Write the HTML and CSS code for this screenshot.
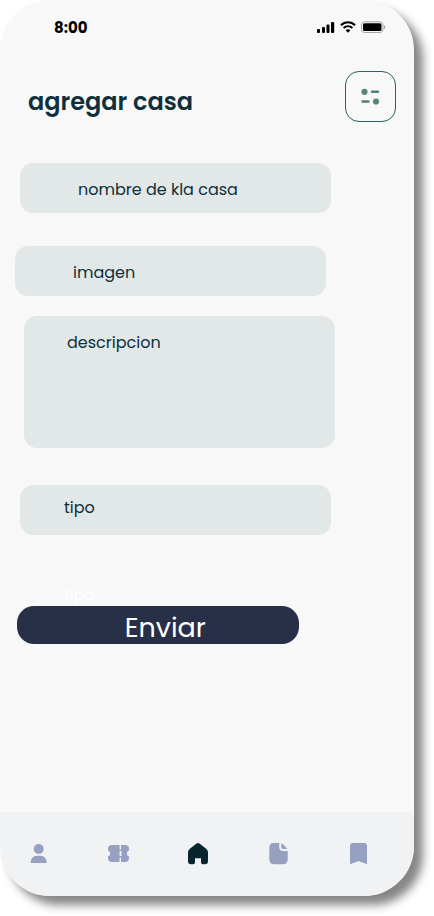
FILE: index.html
```html
<!DOCTYPE html>
<html lang="es">
<head>
<meta charset="utf-8">
<meta name="viewport" content="width=device-width, initial-scale=1">
<title>agregar casa</title>
<link rel="stylesheet" href="styles.css">
</head>
<body>
<div class="phone">
  <div class="status">
    <span class="time">8:00</span>
    <div class="indicators">
      <svg width="18" height="12" viewBox="0 0 18 12" aria-hidden="true"><rect x="0" y="8" width="3" height="4" rx="1"/><rect x="5" y="6" width="3" height="6" rx="1"/><rect x="9.500" y="3.500" width="3" height="8.500" rx="1"/><rect x="14" y="1" width="3.200" height="11" rx="1"/></svg>
      <svg width="16" height="12" viewBox="0 0 16 12" aria-hidden="true"><g fill="none" stroke="#000" stroke-width="2"><path d="M1 4.300C5 .3 11 .3 15 4.300"/><path d="M3.600 7.100c2.600-2.400 6.200-2.400 8.800 0"/></g><path d="M5.600 9.200c1.500-1.200 3.300-1.200 4.800 0L8 11.700z"/></svg>
      <svg width="25" height="12" viewBox="0 0 25 12" aria-hidden="true"><rect x=".5" y=".8" width="21.500" height="10.700" rx="3" fill="none" stroke="#a6a6a6"/><rect x="2" y="2.300" width="18.500" height="7.700" rx="1.500"/><path d="M23 4.200v4c1.700-.8 1.700-3.200 0-4z" fill="#a6a6a6"/></svg>
    </div>
  </div>
  <header class="header">
    <h1>agregar casa</h1>
    <button class="filter" type="button" aria-label="Filtros">
      <svg width="20" height="18" viewBox="0 0 20 18" aria-hidden="true"><g fill="#568974"><circle cx="3.500" cy="3.800" r="3.100"/><circle cx="15" cy="13.500" r="3.100"/></g><path d="M11 3.800h6M1.500 13.500H7.500" stroke="#4e7f7d" stroke-width="2.400" stroke-linecap="round"/></svg>
    </button>
  </header>
  <form class="form">
    <input class="field name" type="text" placeholder="nombre de kla casa" aria-label="nombre de kla casa">
    <input class="field image" type="text" placeholder="imagen" aria-label="imagen">
    <textarea class="field description" placeholder="descripcion" aria-label="descripcion"></textarea>
    <input class="field type" type="text" placeholder="tipo" aria-label="tipo">
    <p class="hint">tipo</p>
    <button class="submit" type="button">Enviar</button>
  </form>
  <nav class="nav">
    <a href="#perfil" aria-label="Perfil"><svg width="24" height="24" viewBox="0 0 24 24" aria-hidden="true"><circle cx="12.700" cy="7" r="5"/><path d="M4.700 21c0-4.200 2.600-7.200 6-7.200h4c3.400 0 6 3 6 7.200z"/></svg></a>
    <a href="#entradas" aria-label="Entradas"><svg width="24" height="24" viewBox="0 0 24 24" aria-hidden="true"><path d="M6 3h7.600v4.500h1v1.500h-1v5h1v1.500h-1V20H6q-4 0-4-4v-1.500q2.200-.6 2.200-3T2 8.500V7q0-4 4-4zM15 3h4q4 0 4 4v1.500q-2.200.6-2.200 3t2.200 3V16q0 4-4 4h-4v-4.500h-.5V14h1V9h-1V7.500h.5z"/></svg></a>
    <a class="active" href="#inicio" aria-label="Inicio"><svg width="24" height="24" viewBox="0 0 24 24" aria-hidden="true"><path d="M10.300 1.800q1.700-1.400 3.400 0l6.500 5Q22 8.300 22 10.300v9q0 3-3 3h-2q-2 0-2-2v-4h-6v4q0 2-2 2H5q-3 0-3-3v-9Q2 8.300 3.800 6.800z"/></svg></a>
    <a href="#documentos" aria-label="Documentos"><svg width="24" height="24" viewBox="0 0 24 24" aria-hidden="true"><path d="M7.500 1h5.700v4.300q0 3.700 3.700 3.700h4.800v8.300q0 5-5 5H8.300q-5 0-5-5V6q0-5 4.200-5zM15.200 1.200q3.900 1.600 6 5.800h-3.700q-2.300 0-2.300-2.300z"/></svg></a>
    <a href="#guardados" aria-label="Guardados"><svg width="24" height="24" viewBox="0 0 24 24" aria-hidden="true"><path d="M7 1h11q3 0 3 3v18.300L12.500 19 4 22.300V4Q4 1 7 1z"/></svg></a>
  </nav>
</div>
</body>
</html>
```
FILE: styles.css
```css
* {
  box-sizing: border-box;
}

body {
  margin: 0;
  padding: 0 20px 20px 0;
  background: #fff;
  font-family: Poppins, Inter, "Open Sans", sans-serif;
  color: #0f2f3c;
}

.phone {
  display: flex;
  flex-direction: column;
  min-height: calc(100vh - 20px);
  overflow: hidden;
  border-radius: 50px;
  background: #f8f8f8;
  box-shadow: 9px 9px 10px rgba(0, 0, 0, 0.48);
}

.status {
  display: flex;
  align-items: center;
  justify-content: space-between;
  height: 54px;
  padding: 0 28px 0 54px;
}

.time {
  font-size: 15px;
  font-weight: 700;
  color: #000;
}

.indicators {
  display: flex;
  gap: 5px;
}

.header {
  display: flex;
  align-items: center;
  justify-content: space-between;
  padding: 17px 18px 0 28px;
}

h1 {
  margin: 0;
  padding-top: 10px;
  font-size: 24px;
  line-height: 32px;
  font-weight: 600;
}

.filter {
  display: grid;
  place-items: center;
  width: 51px;
  height: 51px;
  padding: 0;
  border: 1px solid #28635f;
  border-radius: 14px;
  background: transparent;
}

.form {
  display: flex;
  flex-direction: column;
  flex: 1;
  padding: 41px 0 40px;
}

.field {
  width: 75%;
  height: 50px;
  margin: 0;
  border: 0;
  border-radius: 13px;
  background: #e1e8e7;
  font: inherit;
  font-size: 16px;
  line-height: 24px;
  color: #0f2f3c;
  resize: none;
}

.field::placeholder {
  color: #0f2f3c;
  opacity: 1;
}

.name {
  margin-left: 20px;
  padding: 2px 20px 0 58px;
}

.image {
  margin: 33px 0 0 15px;
  padding: 2px 20px 0 58px;
}

.description {
  height: 132px;
  margin: 20px 0 0 24px;
  padding: 15px 20px 14px 43px;
}

.type {
  margin: 37px 0 0 20px;
  padding: 0 20px 6px 44px;
}

.hint {
  margin: 49px 0 0 64px;
  font-size: 16px;
  line-height: 22px;
  color: #fff;
}

.submit {
  width: 68%;
  height: 38px;
  margin-left: 17px;
  padding: 5px 0 0 15px;
  border: 0;
  border-radius: 17px;
  background: #283048;
  font: inherit;
  font-size: 27px;
  line-height: 33px;
  color: #fff;
}

.nav {
  display: flex;
  align-items: center;
  justify-content: space-between;
  height: 84px;
  padding: 0 44px 0 26px;
  background: #f1f2f4;
}

.nav a {
  display: flex;
  color: #96a0c1;
}

.nav .active {
  color: #06252f;
}

.nav svg {
  fill: currentColor;
}
```
